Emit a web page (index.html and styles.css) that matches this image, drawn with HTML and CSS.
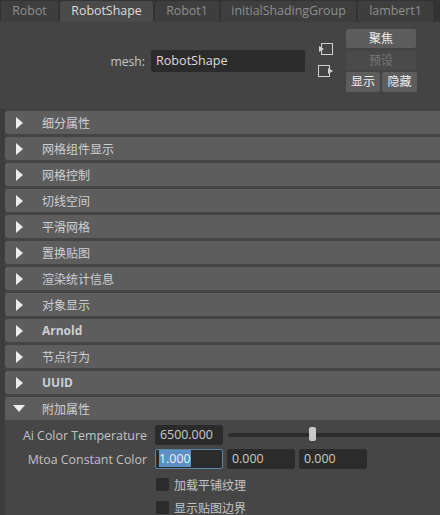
FILE: index.html
```html
<!DOCTYPE html>
<html>
<head>
<meta charset="utf-8">
<link rel="stylesheet" href="styles.css">
</head>
<body>
<div class="tabs">
  <div class="tab t1">Robot</div>
  <div class="tab t2 active">RobotShape</div>
  <div class="tab t3">Robot1</div>
  <div class="tab t4">initialShadingGroup</div>
  <div class="tab t5">lambert1</div>
</div>
<div class="top">
  <div class="mesh">
    <span class="mesh-label">mesh:</span>
    <div class="mesh-input">RobotShape</div>
  </div>
  <div class="icons">
    <svg class="ic" width="16" height="14" viewBox="0 0 16 14"><rect x="3.5" y="1.5" width="11" height="11" fill="none" stroke="#cfcfcf"/><path d="M1 4 L6 7 L1 10 Z" fill="#cfcfcf"/></svg>
    <svg class="ic" width="17" height="14" viewBox="0 0 17 14"><rect x="0.5" y="1.5" width="11" height="11" fill="none" stroke="#cfcfcf"/><path d="M10 4 L15 7 L10 10 Z" fill="#cfcfcf"/></svg>
  </div>
  <div class="btns">
    <div class="btn wide">聚焦</div>
    <div class="btn wide disabled">预设</div>
    <div class="btn-row">
      <div class="btn half">显示</div>
      <div class="btn half">隐藏</div>
    </div>
  </div>
</div>
<div class="list">
  <div class="sec"><span class="tri"></span>细分属性</div>
  <div class="sec"><span class="tri"></span>网格组件显示</div>
  <div class="sec"><span class="tri"></span>网格控制</div>
  <div class="sec"><span class="tri"></span>切线空间</div>
  <div class="sec"><span class="tri"></span>平滑网格</div>
  <div class="sec"><span class="tri"></span>置换贴图</div>
  <div class="sec"><span class="tri"></span>渲染统计信息</div>
  <div class="sec"><span class="tri"></span>对象显示</div>
  <div class="sec latin"><span class="tri"></span>Arnold</div>
  <div class="sec"><span class="tri"></span>节点行为</div>
  <div class="sec latin"><span class="tri"></span>UUID</div>
  <div class="sec open"><span class="tri down"></span>附加属性</div>
  <div class="body">
    <div class="row">
      <span class="lbl">Ai Color Temperature</span>
      <div class="field">6500.000</div>
      <div class="slider"><span class="thumb"></span></div>
    </div>
    <div class="row">
      <span class="lbl">Mtoa Constant Color</span>
      <div class="field sel"><span class="hl">1.000</span></div>
      <div class="field">0.000</div>
      <div class="field">0.000</div>
    </div>
    <div class="crow"><span class="cb"></span>加载平铺纹理</div>
    <div class="crow"><span class="cb"></span>显示贴图边界</div>
  </div>
</div>
</body>
</html>
```
FILE: styles.css
```css
* { box-sizing: border-box; }
html, body { margin: 0; padding: 0; }
body {
  width: 440px;
  height: 515px;
  overflow: hidden;
  background: #444444;
  font-family: "Open Sans", "Noto Sans CJK SC", sans-serif;
  font-size: 12px;
  color: #cccccc;
}
.tabs {
  display: flex;
  height: 22px;
  background: #333333;
  padding: 1px 0 0 1px;
  gap: 2px;
  border-bottom: 1px solid #3a3a3a;
}
.tab {
  height: 21px;
  line-height: 20px;
  font-size: 12.4px;
  color: #8e8e8e;
  background: #3e3e3e;
  border-radius: 3px 3px 0 0;
  text-align: center;
  font-family: "Open Sans", sans-serif;
}
.t1 { width: 57px; }
.t2 { width: 93px; }
.t3 { width: 64px; }
.t4 { width: 135px; }
.t5 { width: 75px; }
.tab.active { background: #4a4a4a; color: #dcdcdc; }

.top {
  display: flex;
  height: 87px;
  padding-top: 7px;
}
.mesh {
  display: flex;
  align-items: center;
  width: 305px;
  margin-top: 21px;
  height: 22px;
}
.mesh-label {
  width: 146px;
  text-align: right;
  padding-right: 1px;
  font-size: 12.2px;
  color: #c4c4c4;
}
.mesh-input {
  margin-left: 5px;
  flex: 1;
  height: 22px;
  background: #2b2b2b;
  border-radius: 2px;
  color: #dddddd;
  font-size: 12.6px;
  line-height: 21px;
  padding-left: 5px;
}
.icons {
  display: flex;
  flex-direction: column;
  gap: 8px;
  margin-left: 13px;
  margin-top: 13px;
  width: 28px;
}
.ic { display: block; }
.btns {
  display: flex;
  flex-direction: column;
  gap: 3px;
}
.btn {
  height: 19px;
  line-height: 19px;
  text-align: center;
  background: #5d5d5d;
  border-radius: 2px;
  color: #eeeeee;
  font-size: 12px;
}
.wide { width: 70px; }
.btn.disabled { background: #4a4a4a; color: #777777; }
.btn-row { display: flex; gap: 2px; height: 20px; margin-top: -1px; }
.half { width: 35px; height: 20px; line-height: 20px; }
.half:first-child { width: 34px; }

.list {
  border-left: 5px solid #3d3d3d;
  padding-top: 2px;
  height: 408px;
}
.sec {
  height: 23px;
  margin-bottom: 3px;
  background: #5d5d5d;
  border-radius: 3px 0 0 3px;
  display: flex;
  align-items: center;
  color: #cdd0d4;
  font-size: 12px;
  font-weight: normal;
}
.sec.latin { font-weight: bold; }
.sec.open { margin-bottom: 0; border-radius: 3px 0 0 0; }
.tri {
  width: 0;
  height: 0;
  border-top: 6px solid transparent;
  border-bottom: 6px solid transparent;
  border-left: 7px solid #ececec;
  margin-left: 11px;
  margin-right: 19px;
}
.tri.down {
  border-left: 6px solid transparent;
  border-right: 6px solid transparent;
  border-top: 7px solid #ececec;
  border-bottom: 0;
  margin-left: 8px;
  margin-right: 17px;
}
.body {
  padding-top: 5px;
  background: #464646;
}
.row {
  display: flex;
  align-items: center;
  height: 20px;
  margin-bottom: 4px;
  gap: 4px;
}
.lbl {
  width: 142px;
  text-align: right;
  font-size: 12.4px;
  color: #c2c2c2;
  margin-right: 4px;
}
.field {
  width: 68px;
  height: 20px;
  background: #2b2b2b;
  border-radius: 2px;
  line-height: 20px;
  padding-left: 5px;
  font-size: 12.4px;
  color: #cccccc;
}
.field.sel {
  border: 1px solid #5a86a8;
  padding-left: 3px;
  line-height: 18px;
}
.hl {
  background: #5d90c6;
  color: #f0f0f0;
}
.slider {
  flex: 1;
  height: 4px;
  background: #2b2b2b;
  border-radius: 2px 0 0 2px;
  position: relative;
  margin-left: 1px;
}
.thumb {
  position: absolute;
  left: 81px;
  top: -6px;
  width: 7px;
  height: 14px;
  background: #c8c8c8;
  border-radius: 2px;
}
.crow {
  display: flex;
  align-items: center;
  height: 23px;
  padding-left: 151px;
  font-size: 12px;
  color: #c4c4c4;
}
.cb {
  width: 13px;
  height: 13px;
  background: #2b2b2b;
  border-radius: 2px;
  margin-right: 5px;
}
```
